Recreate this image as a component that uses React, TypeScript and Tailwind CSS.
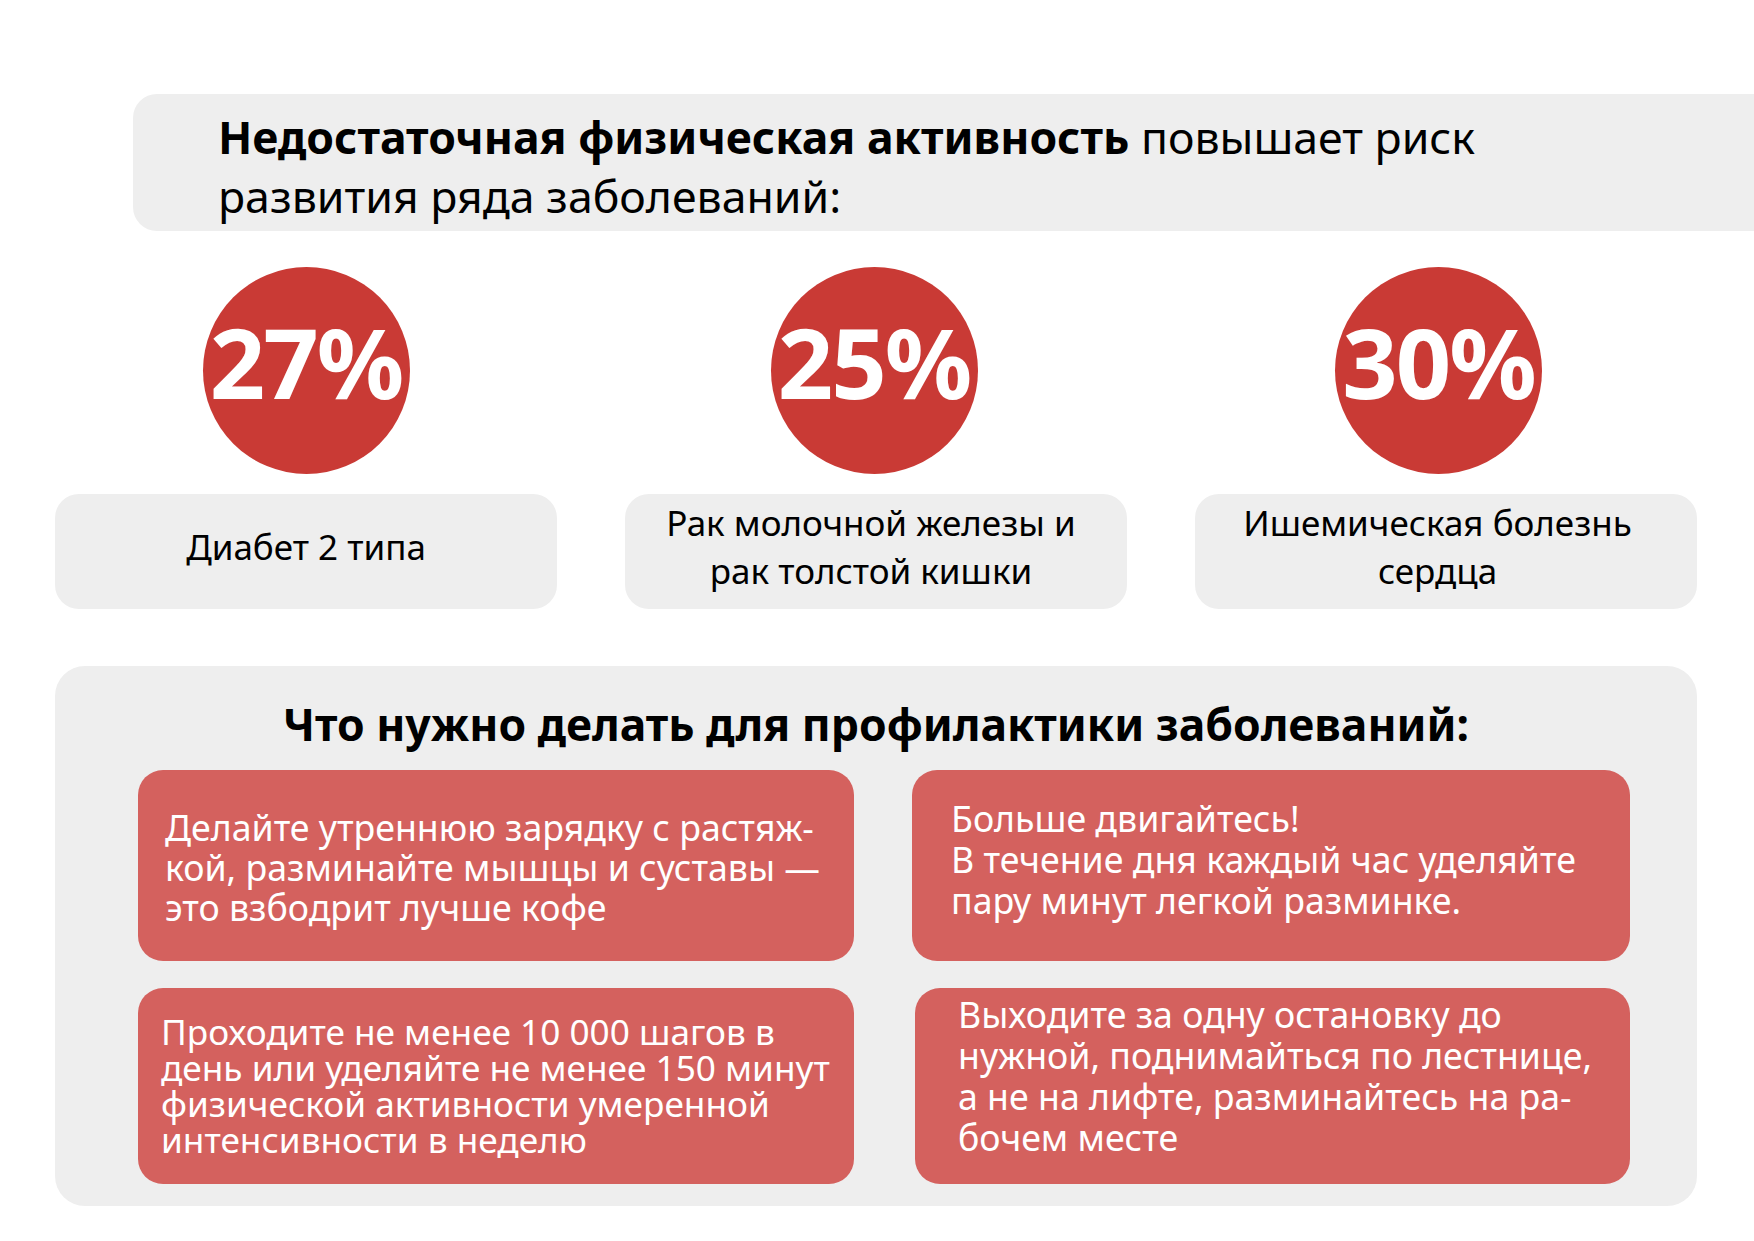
const risks = [
  { value: "27%", lines: ["Диабет 2 типа"], circle: "", text: "" },
  {
    value: "25%",
    lines: ["Рак молочной железы и", "рак толстой кишки"],
    circle: "mr-[4px]",
    text: "pr-[10px]",
  },
  {
    value: "30%",
    lines: ["Ишемическая болезнь", "сердца"],
    circle: "mr-[15px]",
    text: "pr-[17px]",
  },
];

// Each tip keeps its own padding and leading: the source layout is hand-placed.
const tips = [
  {
    box: "pl-[27px] pt-[37px] text-[35.7px] leading-[40px]",
    lines: [
      "Делайте утреннюю зарядку с растяж-",
      "кой, разминайте мышцы и суставы —",
      "это взбодрит лучше кофе",
    ],
  },
  {
    box: "pl-[39px] pt-[28px] text-[35.7px] leading-[41px]",
    lines: [
      "Больше двигайтесь!",
      "В течение дня каждый час уделяйте",
      "пару минут легкой разминке.",
    ],
  },
  {
    box: "pl-[23px] pt-[25px] text-[35.2px] leading-[36px]",
    lines: [
      "Проходите не менее 10 000 шагов в",
      "день или уделяйте не менее 150 минут",
      "физической активности умеренной",
      "интенсивности в неделю",
    ],
  },
  {
    box: "ml-[3px] pl-[43px] pt-[6px] text-[35.7px] leading-[41px]",
    lines: [
      "Выходите за одну остановку до",
      "нужной, поднимайться по лестнице,",
      "а не на лифте, разминайтесь на ра-",
      "бочем месте",
    ],
  },
];

export default function App() {
  return (
    <div className="h-[1241px] w-[1754px] overflow-hidden bg-white font-['Noto_Sans',sans-serif] text-black">
      <header className="ml-[133px] mt-[94px] h-[137px] rounded-l-[24px] bg-[#eeeeee] pl-[85px] pt-[13px]">
        <p className="text-[44.6px] leading-[59px]">
          <b className="font-bold">Недостаточная физическая активность</b>{" "}
          повышает риск
          <br />
          развития ряда заболеваний:
        </p>
      </header>

      <ul className="ml-[55px] mt-[36px] grid grid-cols-[502px_502px_502px] gap-x-[68px]">
        {risks.map((risk) => (
          <li key={risk.value} className="flex flex-col items-center gap-[20px]">
            <div
              className={`flex h-[207px] w-[207px] items-center justify-center rounded-full bg-[#c93a35] ${risk.circle}`}
            >
              <span className="mb-[18px] text-[97px] font-bold leading-none tracking-[-2px] text-white">
                {risk.value}
              </span>
            </div>
            <div
              className={`flex h-[115px] w-full flex-col items-center justify-center rounded-[24px] bg-[#eeeeee] pb-[9px] text-center text-[35px] leading-[48px] ${risk.text}`}
            >
              {risk.lines.map((line) => (
                <span key={line} className="whitespace-nowrap">
                  {line}
                </span>
              ))}
            </div>
          </li>
        ))}
      </ul>

      <section className="ml-[55px] mt-[57px] h-[540px] w-[1642px] rounded-[30px] bg-[#eeeeee] pl-[83px] pt-[33px]">
        <h2 className="-ml-[83px] text-center text-[44.5px] font-bold leading-[50px]">
          Что нужно делать для профилактики заболеваний:
        </h2>
        <div className="mt-[21px] grid grid-cols-[716px_718px] grid-rows-[191px_196px] gap-x-[58px] gap-y-[27px]">
          {tips.map((tip) => (
            <div
              key={tip.lines[0]}
              className={`rounded-[25px] bg-[#d4615e] text-white ${tip.box}`}
            >
              {tip.lines.map((line) => (
                <span key={line} className="block whitespace-nowrap">
                  {line}
                </span>
              ))}
            </div>
          ))}
        </div>
      </section>
    </div>
  );
}
